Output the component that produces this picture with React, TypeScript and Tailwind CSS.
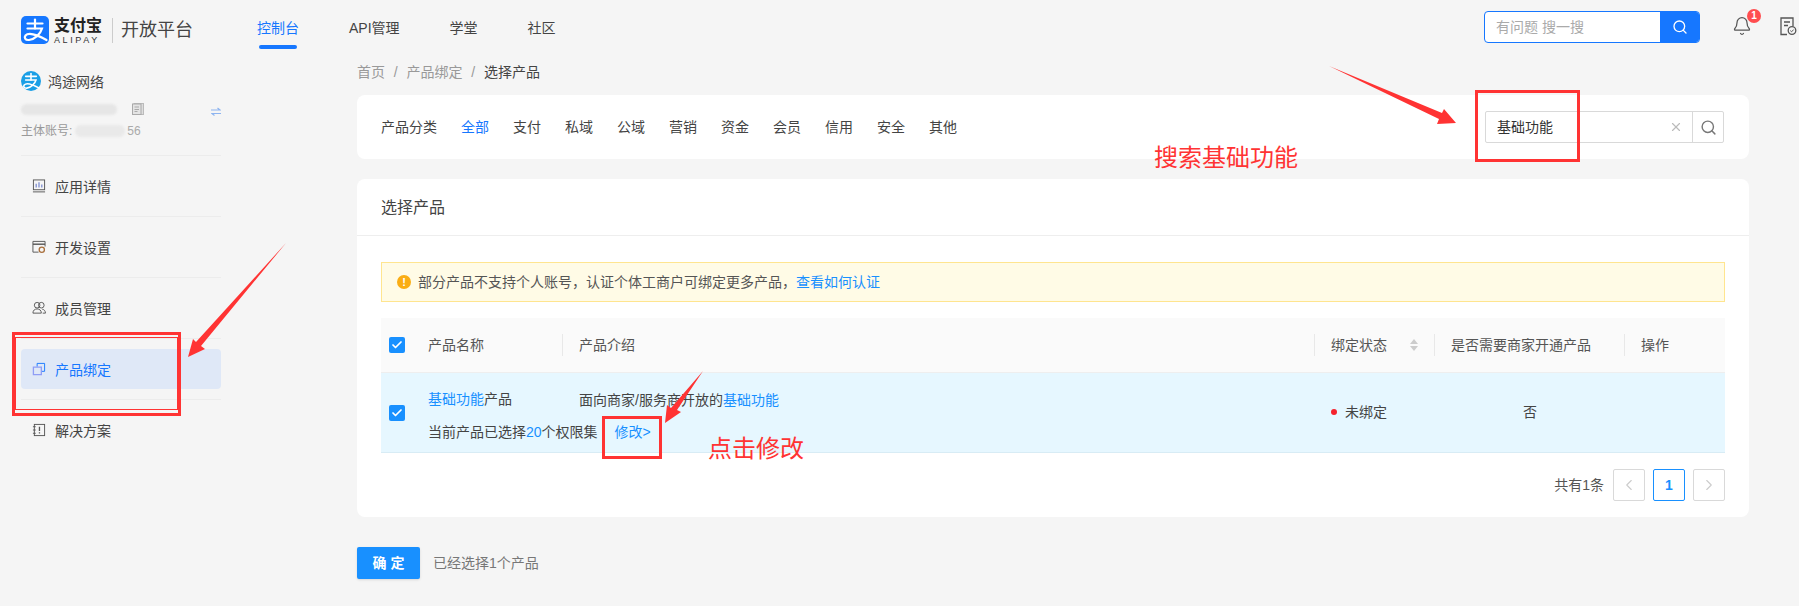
import { Bell, Check, ChevronLeft, ChevronRight, Search, X } from 'lucide-react'

const font = { fontFamily: '"Liberation Sans", "Noto Sans CJK SC", sans-serif' }

function AlipayMark({ size }: { size: number }) {
  return (
    <svg width={size} height={size} viewBox="0 0 28 28" fill="none" stroke="#fff" strokeWidth="2.2" strokeLinecap="round">
      <path d="M6.5 7.5H21.5" />
      <path d="M14 3.5V12.5" />
      <path d="M6.5 12.5H21C19.5 18 13.5 23.5 8 24C4 24.3 3 21.5 4.5 19.5C7 16.5 15 18 25.5 24" />
    </svg>
  )
}

function AppIcon() {
  return (
    <svg width="14" height="14" viewBox="0 0 15 15" fill="none" stroke="#555" strokeWidth="1">
      <rect x="1.5" y="1" width="12" height="10.5" />
      <path d="M1 13.8h13" />
      <path d="M4.5 9V5M7.5 9V3.5M10.5 9V6" stroke="#7f8fd0" strokeWidth="1.4" />
    </svg>
  )
}

function DevIcon() {
  return (
    <svg width="14" height="14" viewBox="0 0 15 15" fill="none" stroke="#555" strokeWidth="1">
      <path d="M7 13H1V1.5h13V7" />
      <path d="M1 4.5h13" strokeWidth="1.5" />
      <circle cx="10.5" cy="10.5" r="2.8" stroke="#a86f3c" strokeWidth="1.4" />
    </svg>
  )
}

function MemberIcon() {
  return (
    <svg width="14" height="14" viewBox="0 0 15 15" fill="none" stroke="#555" strokeWidth="1">
      <circle cx="5.5" cy="4.5" r="3" />
      <circle cx="10" cy="4.5" r="3" />
      <path d="M1 13c0-3 2-4.5 4.5-4.5S10 10 10 13z" />
      <path d="M11 8.8c2 .3 3.4 1.8 3.4 4.2H11.5" />
    </svg>
  )
}

function BindIcon() {
  return (
    <svg width="14" height="14" viewBox="0 0 15 15" fill="none" stroke="#1677ff" strokeWidth="1">
      <path d="M5.5 5V1.5h8V10H10" />
      <path d="M1.5 5.5h8.5v8H1.5z" stroke="#8f9df5" strokeWidth="1.4" />
    </svg>
  )
}

function SolutionIcon() {
  return (
    <svg width="14" height="14" viewBox="0 0 15 15" fill="none" stroke="#555" strokeWidth="1">
      <rect x="2.5" y="1.5" width="11" height="12" />
      <path d="M1 4h3M1 7.5h3M1 11h3" />
      <path d="M8 4v4.5M8 10v1.2" strokeWidth="1.4" />
    </svg>
  )
}

function DocCheckIcon() {
  return (
    <svg width="17" height="19" viewBox="0 0 17 19" fill="none" stroke="#555" strokeWidth="1.3">
      <path d="M7 17.5H1V1h12v8" />
      <path d="M4 5h6M4 8.5h4" />
      <circle cx="12" cy="13.5" r="3.8" />
      <path d="M10.3 13.6l1.3 1.2 2-2.2" strokeWidth="1" />
    </svg>
  )
}

function CopyIcon() {
  return (
    <svg width="12" height="12" viewBox="0 0 12 12" fill="none">
      <rect x="2" y="0.5" width="9.5" height="11" fill="#ddd" stroke="#bbb" />
      <rect x="0.5" y="1" width="8.5" height="10.5" fill="#e4e4e4" stroke="#aaa" />
      <path d="M2.5 4h4.5M2.5 6.5h4.5M2.5 8.5h3" stroke="#aaa" />
    </svg>
  )
}

const sideItems = [
  { label: '应用详情', icon: <AppIcon /> },
  { label: '开发设置', icon: <DevIcon /> },
  { label: '成员管理', icon: <MemberIcon /> },
  { label: '产品绑定', icon: <BindIcon />, active: true },
  { label: '解决方案', icon: <SolutionIcon /> },
]

const categories = ['全部', '支付', '私域', '公域', '营销', '资金', '会员', '信用', '安全', '其他']

function Sidebar() {
  return (
    <aside className="w-[357px] shrink-0 pl-[21px] pt-[11px]">
      <div className="w-[200px]">
        <div className="flex h-5 items-center gap-[7px]">
          <div className="flex h-5 w-5 items-center justify-center rounded-full bg-[#1a9fe6]">
            <AlipayMark size={20} />
          </div>
          <span className="pt-[1px] text-sm text-[#444]">鸿途网络</span>
        </div>
        <div className="mt-[12px] flex h-[12px] items-center">
          <div className="h-[11px] w-[96px] rounded-full bg-[#e6e6e6] blur-[1px]" />
          <span className="ml-[15px]"><CopyIcon /></span>
          <svg className="ml-auto mt-1" width="10" height="9" viewBox="0 0 10 9" fill="none" stroke="#8db4f0" strokeWidth="1.2">
            <path d="M0 3h9L6.5 1M10 6.5H1L3.5 8.5" />
          </svg>
        </div>
        <div className="mt-[7px] flex h-[18px] items-center text-xs text-[#999]">
          <span>主体账号:</span>
          <span className="ml-[3px] flex items-center text-[#aaa]">
            <span className="h-3 w-[50px] rounded-full bg-[#e9e9e9] blur-[1px]" />
            <span className="ml-[2px]">56</span>
          </span>
        </div>
        <div className="mt-[15px]">
          {sideItems.map(item => (
            <div key={item.label} className="border-t border-[#ececec] py-[10px]">
              <div className={`flex h-10 items-center gap-[9px] rounded-[4px] pl-[11px] text-sm ${item.active ? 'bg-[#dfe8f7] text-[#1677ff]' : 'text-[#444]'}`}>
                {item.icon}
                <span className="pt-[2px]">{item.label}</span>
              </div>
            </div>
          ))}
        </div>
      </div>
    </aside>
  )
}

function Header() {
  return (
    <header className="flex h-[60px] items-start pl-[21px] pr-[2px]">
      <div className="mt-[16px] flex h-7 items-center">
        <div className="flex h-7 w-7 items-center justify-center rounded-[5px] bg-[#1677ff]">
          <AlipayMark size={28} />
        </div>
        <div className="ml-[5px] flex w-[50px] flex-col items-start">
          <span className="text-[16px] font-bold leading-[17px] text-[#222]">支付宝</span>
          <span className="mt-[2px] text-[9px] leading-[8px] tracking-[2.6px] text-[#333]">ALIPAY</span>
        </div>
        <div className="ml-[8px] h-[25px] border-l border-[#ccc]" />
        <span className="ml-[8px] text-lg text-[#444]">开放平台</span>
      </div>
      <nav className="ml-[64px] flex gap-[50px] text-sm text-[#444]">
        <div className="mt-[18px] flex flex-col items-center text-[#1677ff]">
          <span className="leading-5">控制台</span>
          <div className="mt-[7px] h-1 w-[38px] rounded-full bg-[#1677ff]" />
        </div>
        <span className="mt-[18px] leading-5">API管理</span>
        <span className="mt-[18px] leading-5">学堂</span>
        <span className="mt-[18px] leading-5">社区</span>
      </nav>
      <div className="ml-auto mt-[11px] flex items-start">
        <div className="flex h-8 w-[216px] overflow-hidden rounded-[4px] border border-[#1677ff] bg-white">
          <span className="flex-1 pl-[11px] text-sm leading-[30px] text-[#aaa]">有问题 搜一搜</span>
          <div className="flex w-[39px] items-center justify-center bg-[#1677ff]">
            <Search size={16} color="#fff" />
          </div>
        </div>
        <div className="relative ml-[32px] mt-[5px]">
          <Bell size={20} color="#555" strokeWidth={1.5} />
          <span className="absolute -right-[9px] -top-[7px] flex h-[14px] w-[14px] items-center justify-center rounded-full bg-[#ff4d4f] text-[10px] font-bold leading-none text-white">1</span>
        </div>
        <div className="ml-[28px] mt-[6px]">
          <DocCheckIcon />
        </div>
      </div>
    </header>
  )
}

function FilterCard() {
  return (
    <div className="flex h-16 items-center rounded-lg bg-white pl-6 pr-[25px] text-sm text-[#444]">
      <span className="mr-6">产品分类</span>
      <div className="flex gap-6">
        {categories.map((c, i) => (
          <span key={c} className={i === 0 ? 'text-[#1677ff]' : ''}>{c}</span>
        ))}
      </div>
      <div className="ml-auto flex h-8 w-[239px] rounded-[2px] border border-[#d9d9d9]">
        <span className="flex-1 pl-[11px] leading-[30px] text-[#333]">基础功能</span>
        <div className="flex w-[32px] items-center justify-center text-[#bbb]">
          <X size={14} />
        </div>
        <div className="flex w-[31px] items-center justify-center border-l border-[#d9d9d9]">
          <Search size={17} color="#777" />
        </div>
      </div>
    </div>
  )
}

function HeadCell({ children, sort }: { children: React.ReactNode; sort?: boolean }) {
  return (
    <div className="flex items-center">
      <div className="flex h-[22px] w-full items-center border-l border-[#e8e8e8] pl-4">
        <span>{children}</span>
        {sort && (
          <svg className="ml-[23px]" width="8" height="12" viewBox="0 0 8 12" fill="#ccc">
            <path d="M4 0l4 5H0zM4 12L0 7h8z" />
          </svg>
        )}
      </div>
    </div>
  )
}

function CheckBox() {
  return (
    <span className="flex h-4 w-4 shrink-0 items-center justify-center rounded-[2px] bg-[#1890ff]">
      <Check size={12} color="#fff" strokeWidth={3.5} />
    </span>
  )
}

function ProductTable() {
  return (
    <div className="mt-4 text-sm">
      <div className="grid h-[55px] grid-cols-[181px_752px_120px_190px_101px] border-b border-[#eee] bg-[#fafafa] text-[#555]">
        <div className="flex items-center gap-[23px] pl-2">
          <CheckBox />
          <span>产品名称</span>
        </div>
        <HeadCell>产品介绍</HeadCell>
        <HeadCell sort>绑定状态</HeadCell>
        <HeadCell>是否需要商家开通产品</HeadCell>
        <HeadCell>操作</HeadCell>
      </div>
      <div className="grid h-[80px] grid-cols-[181px_752px_120px_190px_101px] border-b border-[#d8ecf5] bg-[#e6f7ff] text-[#444]">
        <div className="flex items-center gap-[23px] pl-2">
          <CheckBox />
          <div className="whitespace-nowrap pt-[6px]">
            <div className="leading-5"><span className="text-[#1890ff]">基础功能</span>产品</div>
            <div className="mt-[13px] leading-5">
              当前产品已选择<span className="text-[#1890ff]">20</span>个权限集
              <span className="ml-[17px] text-[#1890ff]">修改&gt;</span>
            </div>
          </div>
        </div>
        <div className="pl-[17px] pt-[17px] leading-5">
          面向商家/服务商开放的<span className="text-[#1890ff]">基础功能</span>
        </div>
        <div className="flex items-center gap-[8px] pb-[1px] pl-[17px]">
          <span className="h-[6px] w-[6px] rounded-full bg-[#f5222d]" />
          <span>未绑定</span>
        </div>
        <div className="flex items-center pb-[1px] pl-[89px]">否</div>
        <div />
      </div>
      <div className="flex items-center justify-end gap-2 pt-4 text-[#555]">
        <span className="mr-[1px]">共有1条</span>
        <span className="flex h-8 w-8 items-center justify-center rounded-[2px] border border-[#d9d9d9]">
          <ChevronLeft size={18} color="#ccc" strokeWidth={1.5} />
        </span>
        <span className="flex h-8 w-8 items-center justify-center rounded-[2px] border border-[#1890ff] font-bold text-[#1890ff]">1</span>
        <span className="flex h-8 w-8 items-center justify-center rounded-[2px] border border-[#d9d9d9]">
          <ChevronRight size={18} color="#ccc" strokeWidth={1.5} />
        </span>
      </div>
    </div>
  )
}

function Annotations() {
  return (
    <>
      {/* red marks drawn over the screenshot */}
      <svg className="pointer-events-none absolute left-0 top-0" width="1799" height="606" fill="#ff3333">
        <polygon points="1329,66 1442,113 1444,109 1456,123 1437,124 1439,119" />
        <polygon points="286,243 201,346 205,349 188,357 193,339 196,342" />
        <polygon points="703,371 677,410 681,412 665,423 667,405 671,408" />
      </svg>
      <div className="pointer-events-none absolute left-[1475px] top-[90px] h-[72px] w-[105px] border-[3px] border-[#ff3333]" />
      <div className="pointer-events-none absolute left-[12px] top-[332px] h-[84px] w-[169px] border-[3px] border-[#ff3333]" />
      <div className="pointer-events-none absolute left-[15px] top-[337px] h-[73px] w-[163px] border border-[#ff3333]" />
      <div className="pointer-events-none absolute left-[602px] top-[416px] h-[43px] w-[60px] border-[3px] border-[#ff3333]" />
      <span className="absolute left-[1154px] top-[142px] text-2xl leading-8 text-[#ff3333]">搜索基础功能</span>
      <span className="absolute left-[708px] top-[433px] text-2xl leading-8 text-[#ff3333]">点击修改</span>
    </>
  )
}

export default function App() {
  return (
    <div className="relative h-[606px] overflow-hidden bg-[#f5f5f5]" style={font}>
      <Header />
      <div className="flex">
        <Sidebar />
        <main className="w-[1392px]">
          <div className="mb-[12px] flex h-[23px] items-center gap-[8.8px] text-sm text-[#999]">
            <span>首页</span>
            <span>/</span>
            <span>产品绑定</span>
            <span>/</span>
            <span className="text-[#444]">选择产品</span>
          </div>
          <FilterCard />
          <section className="mt-5 h-[338px] rounded-lg bg-white">
            <div className="flex h-[57px] items-center border-b border-[#eee] pl-6 pt-[2px] text-base text-[#444]">选择产品</div>
            <div className="px-6 pt-[26px]">
              <div className="flex h-10 items-center border border-[#ffe58f] bg-[#fffbe6] pl-[15px] text-sm text-[#555]">
                <span className="flex h-[14px] w-[14px] items-center justify-center rounded-full bg-[#faad14] text-[11px] font-bold leading-none text-white">!</span>
                <span className="ml-[7px]">部分产品不支持个人账号，认证个体工商户可绑定更多产品，</span>
                <span className="text-[#1890ff]">查看如何认证</span>
              </div>
              <ProductTable />
            </div>
          </section>
          <div className="mt-[30px] flex items-center">
            <button className="h-8 w-[63px] rounded-[2px] bg-[#1890ff] text-sm font-bold text-white shadow-sm">确 定</button>
            <span className="ml-[13px] text-sm text-[#777]">已经选择1个产品</span>
          </div>
        </main>
      </div>
      <Annotations />
    </div>
  )
}
